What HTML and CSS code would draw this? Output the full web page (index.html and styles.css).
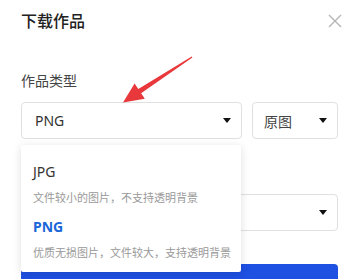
FILE: index.html
```html
<!DOCTYPE html>
<html lang="zh-CN">
<head>
<meta charset="utf-8">
<link rel="stylesheet" href="styles.css">
</head>
<body>
<div class="dialog">
  <div class="header">
    <h2 class="title">下载作品</h2>
    <button class="close" aria-label="关闭">
      <svg width="14" height="14" viewBox="0 0 14 14"><path d="M1 1L13 13M13 1L1 13" stroke="#b4b4b4" stroke-width="1.4" fill="none"/></svg>
    </button>
  </div>

  <div class="field">
    <div class="label">作品类型</div>
    <div class="row">
      <div class="select wide">
        <span class="value">PNG</span>
        <span class="caret"></span>
      </div>
      <div class="select narrow">
        <span class="value">原图</span>
        <span class="caret"></span>
      </div>
    </div>
  </div>

  <div class="field second">
    <div class="label"></div>
    <div class="row">
      <div class="select full">
        <span class="value"></span>
        <span class="caret"></span>
      </div>
    </div>
  </div>

  <button class="primary" aria-label="下载"></button>

  <div class="menu">
    <div class="option">
      <div class="opt-title">JPG</div>
      <div class="opt-desc">文件较小的图片，不支持透明背景</div>
    </div>
    <div class="option active">
      <div class="opt-title">PNG</div>
      <div class="opt-desc">优质无损图片，文件较大，支持透明背景</div>
    </div>
  </div>
</div>

<svg class="annot" width="363" height="279" viewBox="0 0 363 279">
  <polygon fill="#e8383b" points="191.7,56.4 138.3,89.0 134.6,83.4 123,102.5 144.8,98.8 141.1,93.2 192.4,57.6"/>
</svg>
</body>
</html>
```

FILE: styles.css
```css
* { box-sizing: border-box; }
html, body { margin: 0; padding: 0; background: #fff; }
body {
  width: 363px;
  height: 279px;
  overflow: hidden;
  position: relative;
  font-family: "Noto Sans", "Noto Sans CJK SC", sans-serif;
  color: #333;
}
.dialog {
  position: relative;
  padding: 10px 25px 0 21px;
}
.header {
  display: flex;
  justify-content: space-between;
  align-items: center;
  height: 22px;
}
.title {
  margin: 0;
  font-size: 16px;
  line-height: 22px;
  font-weight: 500;
  color: #222;
}
.close {
  border: 0;
  background: none;
  padding: 0;
  margin-right: -4px;
  width: 14px;
  height: 14px;
  display: flex;
}
.field { margin-top: 38px; }
.field.second { margin-top: 23px; }
.label {
  height: 20px;
  font-size: 14px;
  line-height: 20px;
  color: #444;
  font-family: "Noto Sans CJK SC", sans-serif;
}
.row {
  display: flex;
  gap: 10px;
  margin-top: 12px;
}
.select {
  height: 37px;
  border: 1px solid #e0e0e0;
  border-radius: 4px;
  display: flex;
  align-items: center;
  justify-content: space-between;
  padding: 0 10px 0 13px;
  font-size: 14px;
  color: #333;
}
.select.wide { width: 221px; }
.select.narrow { width: 86px; padding-left: 11px; }
.select.narrow .value { font-family: "Noto Sans CJK SC", sans-serif; color: #444; }
.select.full { width: 317px; }
.caret {
  width: 0;
  height: 0;
  border-left: 4.5px solid transparent;
  border-right: 4.5px solid transparent;
  border-top: 5px solid #111;
}
.primary {
  display: block;
  width: 317px;
  height: 44px;
  margin-top: 33px;
  border: 0;
  border-radius: 4px;
  background: #1e50e2;
}
.menu {
  position: absolute;
  top: 145px;
  left: 21px;
  width: 220px;
  padding: 6px 0 11px;
  background: #fff;
  box-shadow: 0 2px 10px rgba(0, 0, 0, 0.13);
  border-radius: 2px;
}
.option { padding: 11px 12px 0; }
.opt-title {
  font-size: 14px;
  line-height: 20px;
  color: #333;
}
.opt-desc {
  margin-top: 6px;
  font-size: 11px;
  line-height: 18px;
  color: #999;
  font-family: "Noto Sans CJK SC", sans-serif;
  white-space: nowrap;
}
.option.active .opt-title {
  color: #1a66d9;
  font-weight: 700;
}
.annot {
  position: absolute;
  top: 0;
  left: 0;
  pointer-events: none;
}
```
